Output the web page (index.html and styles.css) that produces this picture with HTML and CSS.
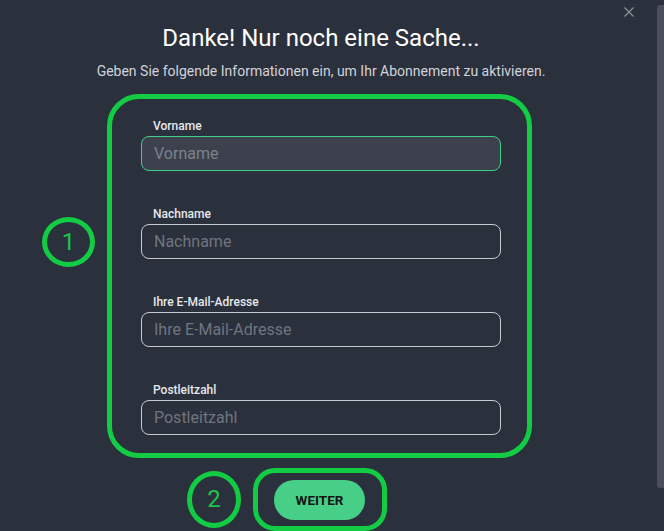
FILE: index.html
```html
<!DOCTYPE html>
<html lang="de">
<head>
    <meta charset="UTF-8">
    <meta name="viewport" content="width=device-width, initial-scale=1.0">
    <title>Abonnement aktivieren</title>
    <link rel="stylesheet" href="styles.css">
</head>
<body>
    <div class="modal">
        <button class="close-btn" aria-label="Schließen">
            <svg width="10" height="10" viewBox="0 0 10 10">
                <path d="M0.5 0.5 L9.5 9.5 M9.5 0.5 L0.5 9.5" stroke="#8d939d" stroke-width="1.2" fill="none"/>
            </svg>
        </button>

        <h1>Danke! Nur noch eine Sache...</h1>
        <p class="subtitle">Geben Sie folgende Informationen ein, um Ihr Abonnement zu aktivieren.</p>

        <form class="form-box">
            <span class="marker marker-one">1</span>

            <div class="field">
                <label for="vorname">Vorname</label>
                <input id="vorname" class="focused" type="text" placeholder="Vorname">
            </div>
            <div class="field">
                <label for="nachname">Nachname</label>
                <input id="nachname" type="text" placeholder="Nachname">
            </div>
            <div class="field">
                <label for="email">Ihre E-Mail-Adresse</label>
                <input id="email" type="email" placeholder="Ihre E-Mail-Adresse">
            </div>
            <div class="field">
                <label for="plz">Postleitzahl</label>
                <input id="plz" type="text" placeholder="Postleitzahl">
            </div>
        </form>

        <div class="actions">
            <span class="marker marker-two">2</span>
            <div class="button-frame">
                <button class="next-btn">WEITER</button>
            </div>
        </div>
    </div>

    <div class="scrollbar"></div>
</body>
</html>
```

FILE: styles.css
```css
body {
    margin: 0;
    height: 531px;
    overflow: hidden;
    background-color: #2b303d;
    font-family: Roboto, "Liberation Sans", Arial, sans-serif;
    position: relative;
}

.modal {
    width: 642px;
    position: relative;
    padding-top: 24px;
}

.close-btn {
    position: absolute;
    top: 7px;
    left: 624px;
    padding: 0;
    border: none;
    background: none;
    width: 10px;
    height: 10px;
    line-height: 0;
    cursor: pointer;
}

h1 {
    margin: 0;
    color: #ffffff;
    font-size: 24px;
    font-weight: 400;
    line-height: 28px;
    text-align: center;
}

.subtitle {
    margin: 11px 0 0;
    color: #d0d3d9;
    font-size: 14px;
    line-height: 17px;
    text-align: center;
}

.form-box {
    position: relative;
    width: 425px;
    box-sizing: border-box;
    margin: 14px 0 0 107px;
    padding: 20px 26px 18px 29px;
    border: 5px solid #12cc44;
    border-radius: 32px;
    display: flex;
    flex-direction: column;
    gap: 36px;
}

.field {
    display: flex;
    flex-direction: column;
    gap: 3px;
}

.field label {
    margin-left: 12px;
    color: #e6e8ec;
    font-size: 12px;
    font-weight: 500;
    line-height: 14px;
}

.field input {
    width: 360px;
    height: 35px;
    box-sizing: border-box;
    padding: 0 12px;
    border: 1px solid #c6c9cf;
    border-radius: 8px;
    background-color: transparent;
    color: #ffffff;
    font-family: inherit;
    font-size: 16px;
    outline: none;
}

.field input::placeholder {
    color: #70757e;
}

.field input.focused {
    border-color: #3fcf8c;
    background-color: #3c414d;
}

.field input.focused::placeholder {
    color: #7d828b;
}

/* annotation markers */
.marker {
    display: flex;
    align-items: center;
    justify-content: center;
    box-sizing: border-box;
    border: 5px solid #12cc44;
    border-radius: 50%;
    color: #1cc54b;
    font-size: 24px;
    font-weight: 400;
}

.marker-one {
    position: absolute;
    left: -70px;
    top: 118px;
    width: 53px;
    height: 50px;
}

.actions {
    display: flex;
    align-items: center;
    gap: 12px;
    margin: 10px 0 0 187px;
}

.marker-two {
    width: 54px;
    height: 57px;
    padding-bottom: 2px;
}

.button-frame {
    width: 134px;
    height: 63px;
    box-sizing: border-box;
    border: 5px solid #12cc44;
    border-radius: 22px;
    display: flex;
    align-items: center;
    justify-content: center;
    padding-right: 1px;
}

.next-btn {
    width: 91px;
    height: 40px;
    border: none;
    border-radius: 20px;
    background-color: #47cf88;
    color: #151515;
    font-family: inherit;
    font-size: 13.5px;
    font-weight: 700;
    cursor: pointer;
}

.scrollbar {
    position: absolute;
    top: 5px;
    right: 0;
    width: 7px;
    height: 483px;
    border-radius: 3px 0 0 3px;
    background-color: #4a4f5b;
}
```
